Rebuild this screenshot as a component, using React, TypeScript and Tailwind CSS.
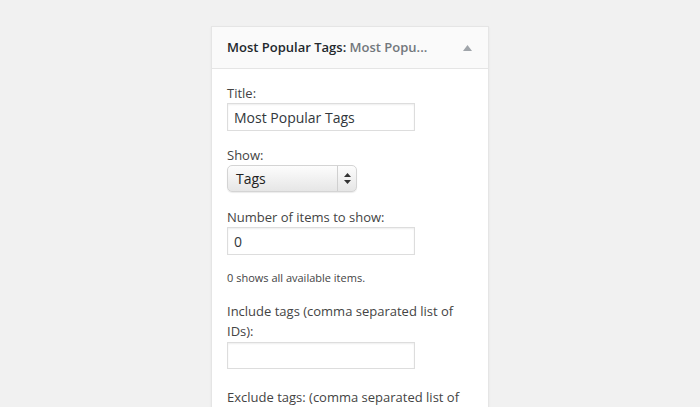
export default function App() {
  const font = { fontFamily: '"Open Sans", "Noto Sans", sans-serif' };
  const label = "block text-[13px] leading-[20px] text-[#444]";
  const input =
    "block w-[188px] border border-[#ddd] bg-white px-[6px] text-[14px] text-[#32373c] shadow-[inset_0_1px_2px_rgba(0,0,0,0.07)]";

  return (
    <div className="h-[407px] w-[700px] overflow-hidden bg-[#f1f1f1]" style={font}>
      <div className="ml-[211px] mt-[26px] w-[278px] border border-[#e5e5e5] bg-white shadow-[0_1px_2px_rgba(0,0,0,0.06)]">
        {/* widget header */}
        <div className="flex h-[42px] items-center justify-between border-b border-[#e5e5e5] bg-[#fafafa] pl-[15px] pr-[16px]">
          <h3 className="text-[13px] font-semibold text-[#23282d]">
            Most Popular Tags<span className="text-[#23282d]">:</span>{" "}
            <span className="text-[#72777c]">Most Popu...</span>
          </h3>
          <svg width="9" height="6" viewBox="0 0 9 6" className="mt-[1px]">
            <path d="M4.5 0 L9 6 L0 6 Z" fill="#a0a5aa" />
          </svg>
        </div>

        {/* widget body */}
        <div className="px-[15px] pt-[14px] pb-4">
          <label className={label}>Title:</label>
          <div className={`${input} flex h-[28px] items-center`}>Most Popular Tags</div>

          <label className={`${label} mt-[14px]`}>Show:</label>
          <div className="flex h-[27px] w-[130px] items-center rounded-[5px] border border-[#d4d4d4] bg-gradient-to-b from-[#fdfdfd] to-[#e6e6e6] shadow-[0_1px_1px_rgba(0,0,0,0.08)]">
            <span className="flex-1 pl-[8px] text-[14px] text-[#222]">Tags</span>
            <div className="flex h-full w-[19px] items-center justify-center border-l border-[#d0d0d0]">
              <svg width="7" height="11" viewBox="0 0 7 11">
                <path d="M3.5 0 L7 4 L0 4 Z M3.5 11 L7 7 L0 7 Z" fill="#333" />
              </svg>
            </div>
          </div>

          <label className={`${label} mt-[15px]`}>Number of items to show:</label>
          <div className={`${input} flex h-[28px] items-center`}>0</div>

          <p className="mt-[15px] text-[11px] leading-[16px] text-[#444]">0 shows all available items.</p>

          <label className={`${label} mt-[15px]`}>
            Include tags (comma separated list of
            <br />
            IDs):
          </label>
          <div className={`${input} mt-[1px] h-[27px]`} />

          <label className={`${label} mt-[18px]`}>Exclude tags: (comma separated list of</label>
        </div>
      </div>
    </div>
  );
}
